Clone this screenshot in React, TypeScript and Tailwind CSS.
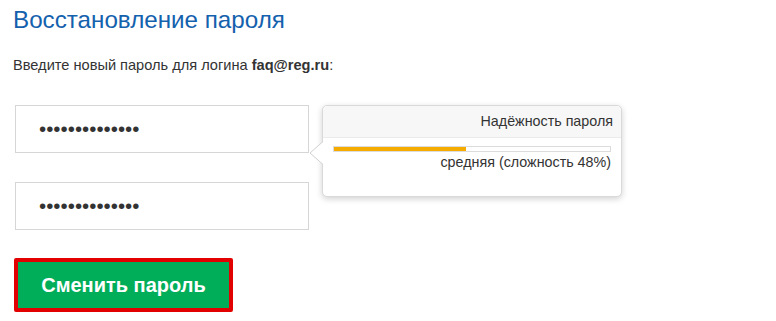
import React from "react";

export default function App() {
  return (
    <div className="w-[776px] h-[321px] bg-white overflow-hidden pl-[13px] text-[#333]" style={{ fontFamily: '"Liberation Sans", Arial, sans-serif' }}>
      <h1 className="mt-[6px] text-[24.2px] leading-[28px] text-[#1461ad] font-normal">Восстановление пароля</h1>
      <p className="mt-[21px] text-[14.6px] leading-[20px] text-[#333]">
        Введите новый пароль для логина <b>faq@reg.ru</b>:
      </p>
      <div className="mt-[30px] ml-[2px] flex flex-col gap-[29px] w-[294px]">
        <div className="relative">
          <input
            type="password"
            readOnly
            value="12345678901234"
            className="w-[294px] h-[48px] border border-[#d6d6d6] pl-[23px] text-[20.5px] text-[#333] outline-none"
          />
          <div className="absolute left-[307px] top-0 w-[300px] h-[92px] bg-white border border-[#d9d9d9] rounded-[5px] shadow-[0_2px_6px_rgba(0,0,0,0.18)]">
            <svg className="absolute left-[-14px] top-[35px]" width="15" height="24" viewBox="0 0 15 24">
              <path d="M14 0.5 L1 12 L14 23.5" fill="white" stroke="#d0d0d0" strokeWidth="1" />
              <rect x="14" y="0" width="1" height="24" fill="white" />
            </svg>
            <div className="h-[32px] bg-[#f7f7f7] border-b border-[#ebebeb] rounded-t-[5px] flex items-center justify-end pr-[8px] text-[14.3px] text-[#333]">
              Надёжность пароля
            </div>
            <div className="px-[10px] pt-[8px]">
              <div className="h-[6px] border border-[#dcdcdc] bg-white">
                <div className="h-full bg-[#f5ab00]" style={{ width: "48%" }} />
              </div>
              <div className="text-right text-[14.3px] leading-[18px] mt-[1px] text-[#333]">средняя (сложность 48%)</div>
            </div>
          </div>
        </div>
        <input
          type="password"
          readOnly
          value="12345678901234"
          className="w-[294px] h-[48px] border border-[#d6d6d6] pl-[23px] text-[20.5px] text-[#333] outline-none"
        />
      </div>
      <button className="mt-[28px] ml-[1px] w-[219px] h-[54px] bg-[#00ae5a] border-[4px] border-[#e30000] rounded-[2px] text-white font-bold text-[20px]">
        Сменить пароль
      </button>
    </div>
  );
}
